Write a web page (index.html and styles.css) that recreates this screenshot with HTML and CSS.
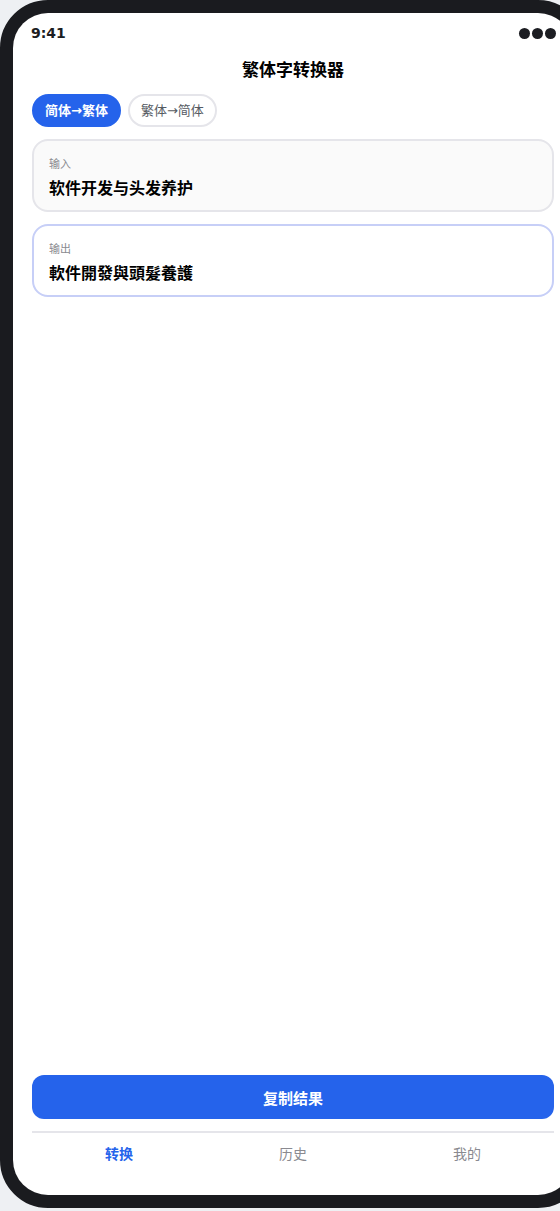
FILE: index.html
```html
<!DOCTYPE html>
<html lang="zh-CN">
<head>
<meta charset="utf-8">
<title>繁体字转换器</title>
<link rel="stylesheet" href="styles.css">
</head>
<body>
<div class="phone">
  <div class="screen">
    <div class="status-bar">
      <span class="time">9:41</span>
      <span class="dots"><i></i><i></i><i></i></span>
    </div>
    <h1 class="title">繁体字转换器</h1>
    <main class="content">
      <div class="segments">
        <button class="pill pill-active">简体→繁体</button>
        <button class="pill">繁体→简体</button>
      </div>
      <section class="card card-input">
        <div class="card-label">输入</div>
        <div class="card-text">软件开发与头发养护</div>
      </section>
      <section class="card card-output">
        <div class="card-label">输出</div>
        <div class="card-text">軟件開發與頭髮養護</div>
      </section>
    </main>
    <button class="copy-btn">复制结果</button>
    <nav class="tab-bar">
      <span class="tab tab-active">转换</span>
      <span class="tab">历史</span>
      <span class="tab">我的</span>
    </nav>
  </div>
</div>
</body>
</html>
```

FILE: styles.css
```css
html, body {
  margin: 0;
  padding: 0;
}
body {
  background: #eef0f3;
  overflow: hidden;
  font-family: "DejaVu Sans", "Noto Sans CJK SC", sans-serif;
  color: #111114;
}
.phone {
  width: 586px;
  height: 1208px;
  box-sizing: border-box;
  border: 13px solid #1a1b1f;
  border-radius: 48px;
  background: #1a1b1f;
}
.screen {
  height: 100%;
  background: #ffffff;
  border-radius: 35px;
  display: flex;
  flex-direction: column;
  padding: 0 19px;
  box-sizing: border-box;
  overflow: hidden;
}
.status-bar {
  display: flex;
  justify-content: space-between;
  align-items: center;
  padding: 10px 0 10px 0;
  height: 20px;
  margin-right: -2px;
  margin-left: -1px;
}
.time {
  font-size: 14px;
  font-weight: 700;
  line-height: 20px;
  color: #1c1d22;
}
.dots {
  display: flex;
  gap: 2px;
}
.dots i {
  display: block;
  width: 11px;
  height: 11px;
  border-radius: 50%;
  background: #1c1d22;
}
.title {
  margin: 0;
  padding: 5px 0;
  text-align: center;
  font-size: 17px;
  line-height: 24px;
  font-weight: 700;
  color: #000;
}
.content {
  flex: 1;
  padding-top: 7px;
  display: flex;
  flex-direction: column;
  gap: 12px;
}
.segments {
  display: flex;
  gap: 7px;
}
.pill {
  font-family: inherit;
  font-size: 13px;
  line-height: 17px;
  padding: 6px 11px;
  border: 2px solid #e5e5ea;
  border-radius: 17px;
  background: #ffffff;
  color: #555a62;
  margin: 0;
}
.pill-active {
  background: #2563eb;
  border-color: #2563eb;
  color: #ffffff;
  font-weight: 700;
}
.card {
  border: 2px solid #e5e5ea;
  border-radius: 16px;
  padding: 16px 15px 10px;
  display: flex;
  flex-direction: column;
  gap: 5px;
}
.card-input {
  background: #fafafa;
}
.card-output {
  background: #ffffff;
  border-color: #c7cff7;
}
.card-label {
  font-size: 11px;
  line-height: 16px;
  color: #8a8a90;
}
.card-text {
  font-size: 16px;
  line-height: 22px;
  font-weight: 700;
  color: #000;
}
.copy-btn {
  font-family: inherit;
  height: 44px;
  border: none;
  border-radius: 12px;
  background: #2563eb;
  color: #ffffff;
  font-size: 15px;
  font-weight: 700;
  margin: 0;
}
.tab-bar {
  margin-top: 12px;
  border-top: 2px solid #e5e5ea;
  display: grid;
  grid-template-columns: 1fr 1fr 1fr;
  padding: 12px 0 32px;
}
.tab {
  text-align: center;
  font-size: 14px;
  line-height: 18px;
  color: #8a8a90;
}
.tab-active {
  color: #2563eb;
  font-weight: 700;
}
```
